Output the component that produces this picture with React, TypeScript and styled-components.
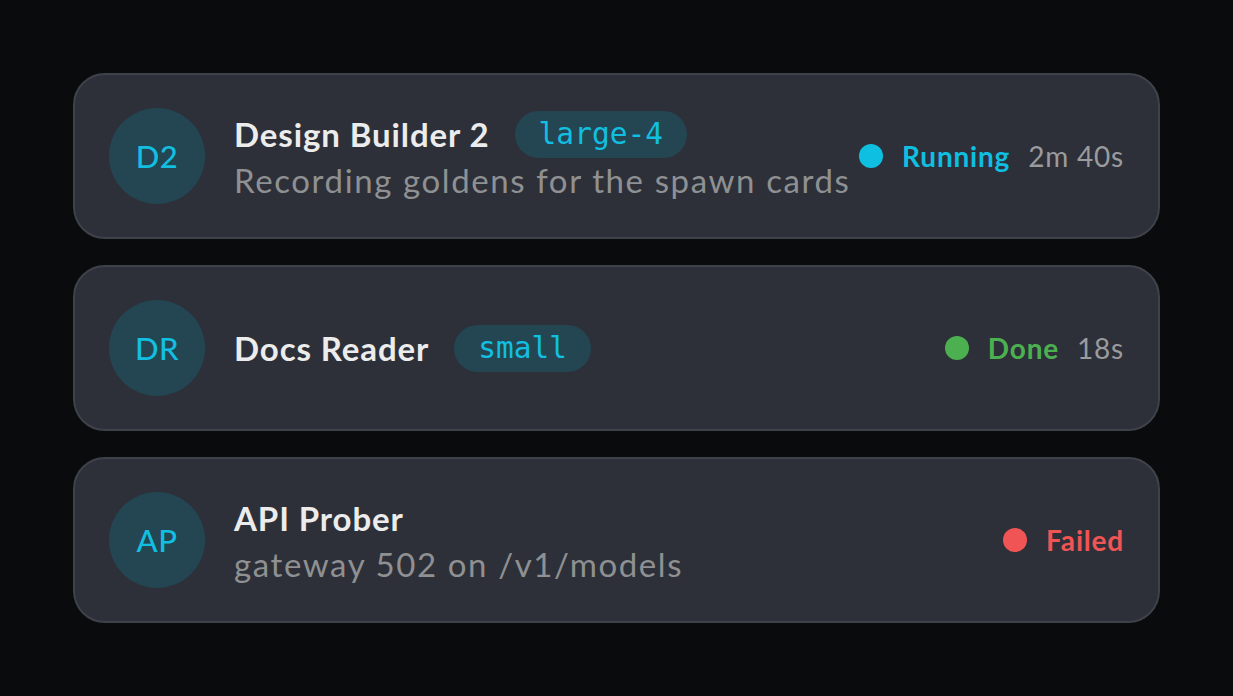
import React from "react";
import styled, { createGlobalStyle } from "styled-components";

const GlobalStyle = createGlobalStyle`
    html, body {
        margin: 0;
        padding: 0;
        background: #0a0b0d;
    }
    body {
        font-family: Lato, "Noto Sans", sans-serif;
    }
`;

const Page = styled.div`
    min-height: 696px;
    box-sizing: border-box;
    padding: 73px 73px;
    display: flex;
    flex-direction: column;
    gap: 26px;
`;

const Card = styled.div`
    display: flex;
    align-items: center;
    gap: 29px;
    padding: 33px 34px;
    background: #2d3039;
    border: 2px solid #3e424b;
    border-radius: 32px;
`;

const Avatar = styled.div`
    flex: none;
    width: 96px;
    height: 96px;
    border-radius: 50%;
    background: #234652;
    color: #12bfe0;
    display: flex;
    align-items: center;
    justify-content: center;
    font-size: 31px;
    font-weight: 500;
    letter-spacing: 0.5px;
`;

const Body = styled.div`
    flex: 1;
    min-width: 0;
    display: flex;
    flex-direction: column;
`;

const TitleRow = styled.div`
    display: flex;
    align-items: center;
    gap: 25px;
    height: 47px;
`;

const Name = styled.div`
    color: #ececec;
    font-size: 33px;
    font-weight: 700;
    letter-spacing: 0.9px;
`;

const Badge = styled.span`
    height: 47px;
    padding: 0 24px;
    border-radius: 24px;
    background: #234652;
    color: #12bfe0;
    font-family: "DejaVu Sans Mono", "Liberation Mono", monospace;
    font-size: 29.5px;
    display: flex;
    align-items: center;
`;

const Detail = styled.div`
    color: #8f9092;
    font-size: 33px;
    line-height: 44px;
    letter-spacing: 1.6px;
    white-space: nowrap;
`;

const Status = styled.div`
    flex: none;
    display: flex;
    align-items: center;
    font-size: 28px;
    letter-spacing: 0.8px;
`;

const Dot = styled.span<{ $color: string }>`
    width: 24px;
    height: 24px;
    border-radius: 50%;
    background: ${(p) => p.$color};
    margin-right: 19px;
`;

const Label = styled.span<{ $color: string }>`
    color: ${(p) => p.$color};
    font-weight: 700;
`;

const Elapsed = styled.span`
    color: #9a9b9d;
    margin-left: 18px;
`;

type Agent = {
    initials: string;
    name: string;
    size?: string;
    detail?: string;
    status: string;
    color: string;
    time?: string;
};

const agents: Agent[] = [
    {
        initials: "D2",
        name: "Design Builder 2",
        size: "large-4",
        detail: "Recording goldens for the spawn cards",
        status: "Running",
        color: "#0fbfe1",
        time: "2m 40s",
    },
    {
        initials: "DR",
        name: "Docs Reader",
        size: "small",
        status: "Done",
        color: "#4cb050",
        time: "18s",
    },
    {
        initials: "AP",
        name: "API Prober",
        detail: "gateway 502 on /v1/models",
        status: "Failed",
        color: "#f05454",
    },
];

const App = () => {
    return (
        <>
            <GlobalStyle />
            <Page>
                {agents.map((a) => (
                    <Card key={a.initials}>
                        <Avatar>{a.initials}</Avatar>
                        <Body>
                            <TitleRow>
                                <Name>{a.name}</Name>
                                {a.size && <Badge>{a.size}</Badge>}
                            </TitleRow>
                            {a.detail && <Detail>{a.detail}</Detail>}
                        </Body>
                        <Status>
                            <Dot $color={a.color} />
                            <Label $color={a.color}>{a.status}</Label>
                            {a.time && <Elapsed>{a.time}</Elapsed>}
                        </Status>
                    </Card>
                ))}
            </Page>
        </>
    );
};

export default App;
